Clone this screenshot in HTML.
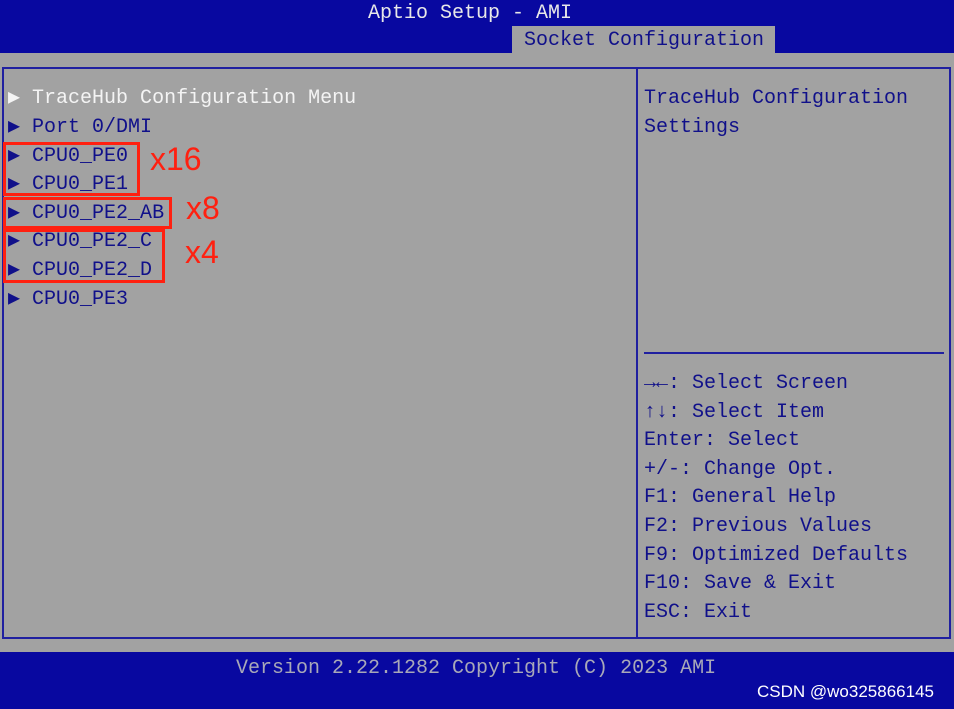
<!DOCTYPE html><html><head><style>
body{margin:0;width:954px;height:709px;overflow:hidden;background:#a2a2a2;position:relative;font-family:"Liberation Mono",monospace;font-size:20px;}
div{position:absolute;}
.t{white-space:pre;line-height:28.6px;color:#10108a;}
.w{color:#f4f4f4;}
.r{border:3px solid #ff2010;box-sizing:border-box;}
.lab{font-family:"Liberation Sans",sans-serif;color:#ff2010;font-size:32px;line-height:32px;}
</style></head><body>
<div style="left:0;top:0;width:954px;height:53px;background:#0808a0"></div>
<div class="t" style="left:368px;top:0px;color:#e8e8e8">Aptio Setup - AMI</div>
<div style="left:512px;top:26px;width:263px;height:27px;background:#a2a2a2"></div>
<div class="t" style="left:524px;top:27px">Socket Configuration</div>
<div style="left:2px;top:67px;width:945px;height:568px;border:2px solid #2020a0"></div>
<div style="left:636px;top:67px;width:2px;height:572px;background:#2020a0"></div>
<div style="left:644px;top:352px;width:300px;height:2px;background:#2020a0"></div>
<div class="t w" style="left:8px;top:85px">▶ TraceHub Configuration Menu</div>
<div class="t" style="left:8px;top:114px">▶ Port 0/DMI
▶ CPU0_PE0
▶ CPU0_PE1
▶ CPU0_PE2_AB
▶ CPU0_PE2_C
▶ CPU0_PE2_D
▶ CPU0_PE3</div>
<div class="t" style="left:644px;top:85px">TraceHub Configuration
Settings</div>
<div class="t" style="left:644px;top:370px">→←: Select Screen
↑↓: Select Item
Enter: Select
+/-: Change Opt.
F1: General Help
F2: Previous Values
F9: Optimized Defaults
F10: Save &amp; Exit
ESC: Exit</div>
<div class="r" style="left:3px;top:142px;width:137px;height:54px"></div>
<div class="r" style="left:3px;top:197px;width:169px;height:32px"></div>
<div class="r" style="left:3px;top:229px;width:162px;height:54px"></div>
<div class="lab" style="left:150px;top:143px">x16</div>
<div class="lab" style="left:186px;top:192px">x8</div>
<div class="lab" style="left:185px;top:236px">x4</div>
<div style="left:0;top:652px;width:954px;height:57px;background:#0808a0"></div>
<div class="t" style="left:236px;top:655px;color:#a8a8b8">Version 2.22.1282 Copyright (C) 2023 AMI</div>
<div style="left:757px;top:682px;font-family:'Liberation Sans',sans-serif;font-size:17px;color:#fff">CSDN @wo325866145</div>
</body></html>
